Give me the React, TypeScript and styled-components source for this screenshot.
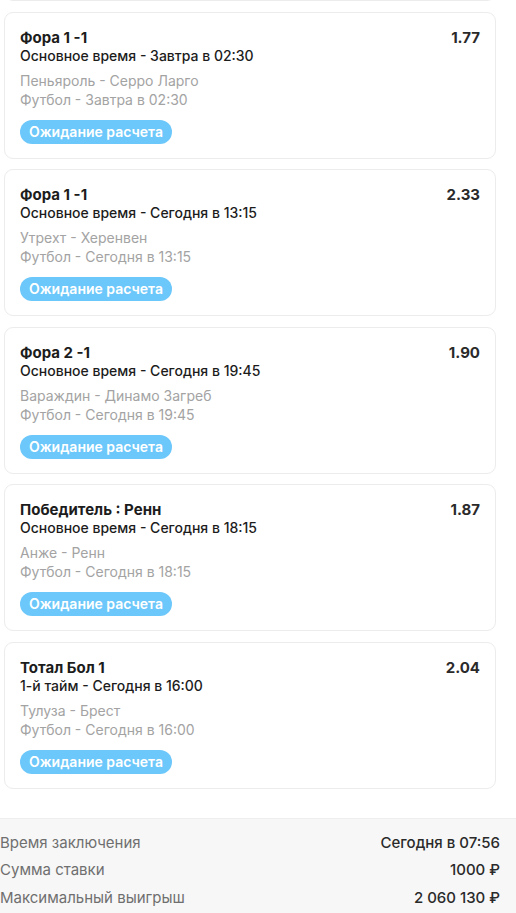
import styled, { createGlobalStyle } from 'styled-components'

const GlobalStyle = createGlobalStyle`
  html, body {
    margin: 0;
    padding: 0;
    background: #ffffff;
    font-family: Inter, 'Noto Sans', sans-serif;
    -webkit-font-smoothing: antialiased;
  }
`

interface Bet {
  market: string
  period: string
  teams: string
  event: string
  odds: string
}

const bets: Bet[] = [
  {
    market: 'Фора 1 -1',
    period: 'Основное время - Завтра в 02:30',
    teams: 'Пеньяроль - Серро Ларго',
    event: 'Футбол - Завтра в 02:30',
    odds: '1.77',
  },
  {
    market: 'Фора 1 -1',
    period: 'Основное время - Сегодня в 13:15',
    teams: 'Утрехт - Херенвен',
    event: 'Футбол - Сегодня в 13:15',
    odds: '2.33',
  },
  {
    market: 'Фора 2 -1',
    period: 'Основное время - Сегодня в 19:45',
    teams: 'Вараждин - Динамо Загреб',
    event: 'Футбол - Сегодня в 19:45',
    odds: '1.90',
  },
  {
    market: 'Победитель : Ренн',
    period: 'Основное время - Сегодня в 18:15',
    teams: 'Анже - Ренн',
    event: 'Футбол - Сегодня в 18:15',
    odds: '1.87',
  },
  {
    market: 'Тотал Бол 1',
    period: '1-й тайм - Сегодня в 16:00',
    teams: 'Тулуза - Брест',
    event: 'Футбол - Сегодня в 16:00',
    odds: '2.04',
  },
]

const summary = [
  { label: 'Время заключения', value: 'Сегодня в 07:56' },
  { label: 'Сумма ставки', value: '1000 ₽' },
  { label: 'Максимальный выигрыш', value: '2 060 130 ₽' },
]

const BetCard = ({ bet }: { bet: Bet }) => (
  <Card>
    <TopRow>
      <Market>{bet.market}</Market>
      <Odds>{bet.odds}</Odds>
    </TopRow>
    <Period>{bet.period}</Period>
    <Meta>
      <MetaLine>{bet.teams}</MetaLine>
      <MetaLine>{bet.event}</MetaLine>
    </Meta>
    <Status>Ожидание расчета</Status>
  </Card>
)

const App = () => {
  return (
    <>
      <GlobalStyle />
      <Page>
        <List>
          {/* previous card, scrolled out of view except its bottom edge */}
          <Card aria-hidden />
          {bets.map((bet, i) => (
            <BetCard key={i} bet={bet} />
          ))}
        </List>
        <Summary>
          {summary.map((row) => (
            <SummaryRow key={row.label}>
              <SummaryLabel>{row.label}</SummaryLabel>
              <SummaryValue>{row.value}</SummaryValue>
            </SummaryRow>
          ))}
        </Summary>
      </Page>
    </>
  )
}

export default App

const Page = styled.div`
  width: 516px;
  height: 913px;
  overflow: hidden;
  display: flex;
  flex-direction: column;
`

const List = styled.div`
  display: flex;
  flex-direction: column;
  gap: 10.5px;
  margin-top: -146px;
  padding: 0 20px 0 4px;
`

const Card = styled.div`
  height: 147px;
  box-sizing: border-box;
  border: 1px solid #ececec;
  border-radius: 9px;
  padding: 16px 15px 14px 15px;
  background: #ffffff;
  display: flex;
  flex-direction: column;
  align-items: flex-start;
`

const TopRow = styled.div`
  align-self: stretch;
  display: flex;
  justify-content: space-between;
  align-items: baseline;
`

const Market = styled.div`
  font-size: 15px;
  line-height: 18px;
  font-weight: 700;
  color: #1c1c1c;
`

const Odds = styled.div`
  font-size: 15px;
  line-height: 18px;
  font-weight: 700;
  color: #2a2a2a;
`

const Period = styled.div`
  font-size: 14px;
  line-height: 18px;
  font-weight: 500;
  color: #1c1c1c;
`

const Meta = styled.div`
  margin-top: 6px;
  display: flex;
  flex-direction: column;
`

const MetaLine = styled.div`
  font-size: 14px;
  line-height: 19px;
  color: #a3a3a3;
`

const Status = styled.div`
  margin-top: 11px;
  height: 24px;
  padding: 0 9px;
  border-radius: 12px;
  background: #6cc7fa;
  color: #ffffff;
  font-size: 14px;
  font-weight: 600;
  line-height: 24px;
`

const Summary = styled.div`
  margin-top: 29px;
  flex: 1;
  background: #f7f7f7;
  border-top: 1px solid #eeeeee;
  padding: 10px 16px 0 0;
  display: flex;
  flex-direction: column;
`

const SummaryRow = styled.div`
  display: flex;
  justify-content: space-between;
  align-items: center;
  height: 27.5px;
`

const SummaryLabel = styled.div`
  font-size: 15px;
  color: #6f6f6f;
`

const SummaryValue = styled.div`
  font-size: 15px;
  font-weight: 500;
  color: #2a2a2a;
`
